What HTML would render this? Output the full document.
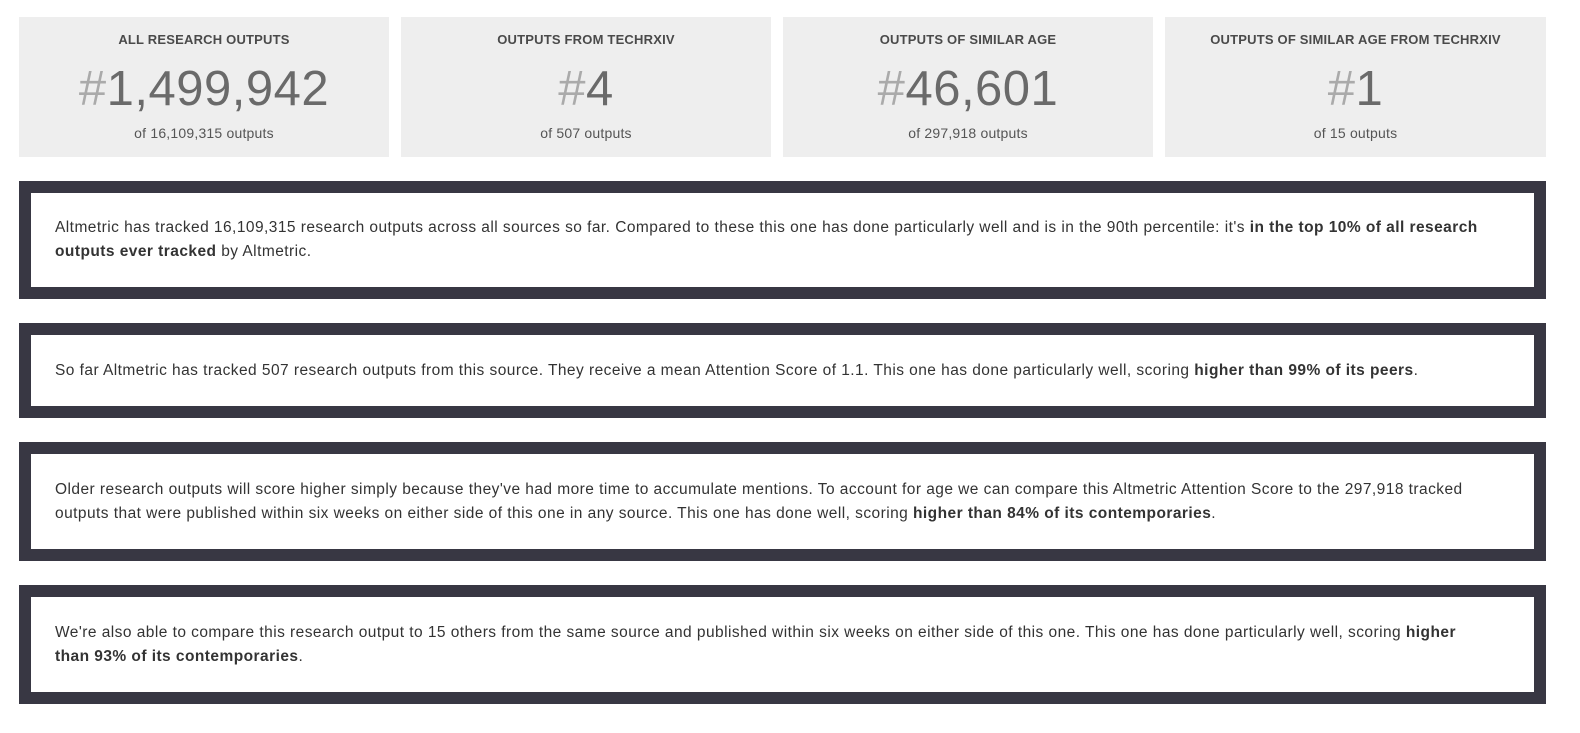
<!DOCTYPE html>
<html><head><style>
body{margin:0;background:#fff;font-family:"Liberation Sans",sans-serif;width:1580px;height:733px;overflow:hidden;position:relative}
.box{position:absolute;top:17px;width:370px;height:140px;background:#eee;text-align:center;color:#555}
.t{position:absolute;top:15px;width:100%;font-size:13px;font-weight:bold;color:#4a4a4a;letter-spacing:0.2px}
.n{position:absolute;top:44px;width:100%;font-size:49px;color:#6a6a6a;line-height:56px;letter-spacing:0.5px}
.n span{color:#aaa}
.s{position:absolute;top:108px;width:100%;font-size:14px;color:#555;letter-spacing:0.2px}
.p{position:absolute;left:19px;width:1503px;border:12px solid #383743;background:#fff;color:#333;font-size:15.5px;letter-spacing:0.45px;line-height:24px;display:flex;align-items:center}
.p div{padding:0 24px}
</style></head><body>
<div class="box" style="left:19px"><div class="t">ALL RESEARCH OUTPUTS</div><div class="n"><span>#</span>1,499,942</div><div class="s">of 16,109,315 outputs</div></div>
<div class="box" style="left:401px"><div class="t">OUTPUTS FROM TECHRXIV</div><div class="n"><span>#</span>4</div><div class="s">of 507 outputs</div></div>
<div class="box" style="left:783px"><div class="t">OUTPUTS OF SIMILAR AGE</div><div class="n"><span>#</span>46,601</div><div class="s">of 297,918 outputs</div></div>
<div class="box" style="left:1165px;width:381px"><div class="t">OUTPUTS OF SIMILAR AGE FROM TECHRXIV</div><div class="n"><span>#</span>1</div><div class="s">of 15 outputs</div></div>
<div class="p" style="top:181px;height:94px"><div>Altmetric has tracked 16,109,315 research outputs across all sources so far. Compared to these this one has done particularly well and is in the 90th percentile: it's <b>in the top 10% of all research outputs ever tracked</b> by Altmetric.</div></div>
<div class="p" style="top:323px;height:71px"><div>So far Altmetric has tracked 507 research outputs from this source. They receive a mean Attention Score of 1.1. This one has done particularly well, scoring <b>higher than 99% of its peers</b>.</div></div>
<div class="p" style="top:442px;height:95px"><div>Older research outputs will score higher simply because they've had more time to accumulate mentions. To account for age we can compare this Altmetric Attention Score to the 297,918 tracked outputs that were published within six weeks on either side of this one in any source. This one has done well, scoring <b>higher than 84% of its contemporaries</b>.</div></div>
<div class="p" style="top:585px;height:95px"><div>We're also able to compare this research output to 15 others from the same source and published within six weeks on either side of this one. This one has done particularly well, scoring <b>higher<br>than 93% of its contemporaries</b>.</div></div>
</body></html>
